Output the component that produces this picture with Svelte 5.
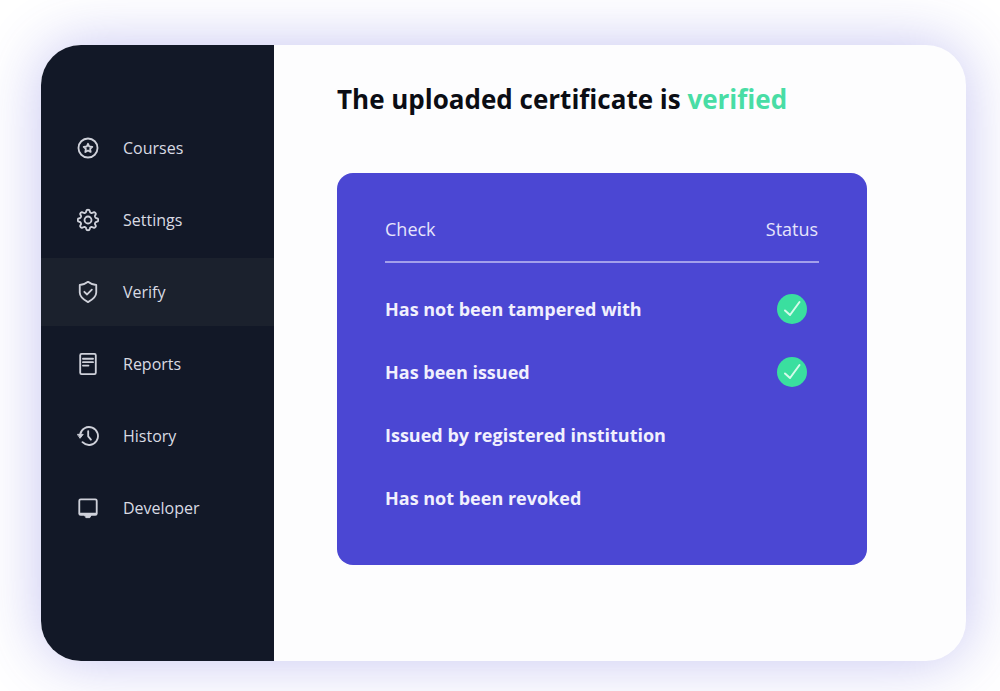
<script>
  const items = [
    { label: 'Courses', icon: 'courses' },
    { label: 'Settings', icon: 'settings' },
    { label: 'Verify', icon: 'verify' },
    { label: 'Reports', icon: 'reports' },
    { label: 'History', icon: 'history' },
    { label: 'Developer', icon: 'developer' }
  ];
  let active = $state('Verify');

  const checks = [
    { label: 'Has not been tampered with', passed: true },
    { label: 'Has been issued', passed: true },
    { label: 'Issued by registered institution', passed: false },
    { label: 'Has not been revoked', passed: false }
  ];

  // Gear outline: a circle whose radius rises and falls eight times.
  const gear =
    'M' +
    Array.from({ length: 96 }, (_, i) => {
      const angle = (i / 96) * Math.PI * 2;
      const radius = 9.8 + 1.4 * Math.tanh(2 * Math.cos(8 * angle));
      return `${(12 + radius * Math.cos(angle)).toFixed(2)} ${(12 + radius * Math.sin(angle)).toFixed(2)}`;
    }).join('L') +
    'Z';
</script>

<div class="page">
  <div class="shell">
    <nav class="sidebar">
      {#each items as item}
        <a
          href={'#' + item.icon}
          class="item"
          class:active={active === item.label}
          aria-current={active === item.label ? 'page' : undefined}
          onclick={() => (active = item.label)}
        >
          <svg class="icon" viewBox="0 0 24 24" aria-hidden="true">
            {#if item.icon === 'courses'}
              <circle cx="12" cy="12" r="10.4" />
              <path d="M12 7.400l1.400 3 3.300.4-2.400 2.200.6 3.300-2.900-1.600-2.900 1.600.6-3.300-2.400-2.200 3.300-.4z" />
            {:else if item.icon === 'settings'}
              <path d={gear} />
              <circle cx="12" cy="12" r="3.800" />
            {:else if item.icon === 'verify'}
              <path d="M12 .9q3.600 3 9 3.500v8.200c0 4.800-4.600 8.100-9 10.500-4.400-2.400-9-5.700-9-10.500V4.400q5.400-.5 9-3.500z" />
              <path d="M8 11.800l3 2.900 5.200-5.200" />
            {:else if item.icon === 'reports'}
              <rect x="3.500" y="1" width="17" height="22" rx="1.500" />
              <path d="M6.500 6.300h11M6.500 10h11M6.500 13.700h6" />
            {:else if item.icon === 'history'}
              <path d="M3.400 10.500a9.800 9.800 0 1 1 2.600 8.300" />
              <path class="solid" d="M.8 10.200h6l-3.200 4z" />
              <path d="M12.200 6.800v5.600l3 3.600" />
            {:else}
              <rect x="2.500" y="2.500" width="19" height="17" rx="1.500" />
              <path d="M3 18.300h18" />
              <path class="solid" d="M8.500 19.500h7l-1.500 3h-4z" />
            {/if}
          </svg>
          <span>{item.label}</span>
        </a>
      {/each}
    </nav>

    <main class="content">
      <h1>The uploaded certificate is <span class="verified">verified</span></h1>
      <section class="card">
        <table>
          <thead>
            <tr>
              <th scope="col">Check</th>
              <th scope="col" class="status">Status</th>
            </tr>
          </thead>
          <tbody>
            {#each checks as check}
              <tr>
                <th scope="row">{check.label}</th>
                <td class="status">
                  {#if check.passed}
                    <svg class="badge" viewBox="0 0 30 30" aria-hidden="true">
                      <circle cx="15" cy="15" r="15" />
                      <path d="M8 16.500l5 4.500 9.500-13" />
                    </svg>
                  {/if}
                </td>
              </tr>
            {/each}
          </tbody>
        </table>
      </section>
    </main>
  </div>
</div>

<style>
  :global(body) {
    margin: 0;
    background: #fff;
  }
  .page {
    box-sizing: border-box;
    min-height: 100vh;
    padding: 45px 34px 30px 41px;
    display: flex;
    overflow: hidden;
    font-family: 'Open Sans', 'Noto Sans', sans-serif;
  }
  .shell {
    flex: 1;
    display: flex;
    border-radius: 40px;
    overflow: hidden;
    background: #fdfdfe;
    box-shadow: 0 0 60px rgba(76, 72, 212, 0.32);
  }
  .sidebar {
    box-sizing: border-box;
    flex: 0 0 233px;
    padding: 69px 0 40px;
    display: flex;
    flex-direction: column;
    gap: 4px;
    background: #121827;
  }
  .item {
    height: 68px;
    padding-left: 36px;
    display: flex;
    align-items: center;
    gap: 24px;
    color: #d9dbe3;
    font-size: 16px;
    line-height: 24px;
    text-decoration: none;
  }
  .item.active {
    background: #1b212d;
  }
  .icon {
    width: 22px;
    height: 24px;
    fill: none;
    stroke: #cfd1da;
    stroke-width: 2;
    stroke-linecap: round;
    stroke-linejoin: round;
  }
  .icon .solid {
    fill: #cfd1da;
    stroke-width: 1;
  }
  .content {
    flex: 1;
    padding: 34px 99px 40px 63px;
  }
  h1 {
    margin: 0 0 54px;
    color: #0b0d14;
    font-size: 26px;
    line-height: 40px;
    font-weight: 700;
    white-space: nowrap;
  }
  .verified {
    color: #48dda5;
  }
  .card {
    padding: 24px 48px 36px;
    border-radius: 16px;
    background: #4b47d3;
    color: #f1f0fd;
  }
  table {
    width: 100%;
    border-collapse: separate;
    border-spacing: 0;
    font-size: 18px;
    line-height: 24px;
  }
  th,
  td {
    padding: 0;
    text-align: left;
  }
  thead th {
    height: 64px;
    border-bottom: 2px solid #a3a0eb;
    font-weight: 400;
    color: #e6e4fb;
  }
  tbody::before {
    content: '';
    display: block;
    height: 14px;
  }
  tbody th,
  tbody td {
    height: 63px;
  }
  .status {
    width: 54px;
    text-align: center;
  }
  .badge {
    display: block;
    width: 30px;
    height: 30px;
    margin: 0 auto;
  }
  .badge circle {
    fill: #3adf9f;
  }
  .badge path {
    fill: none;
    stroke: #d5fbea;
    stroke-width: 2;
    stroke-linecap: round;
    stroke-linejoin: round;
  }
</style>
